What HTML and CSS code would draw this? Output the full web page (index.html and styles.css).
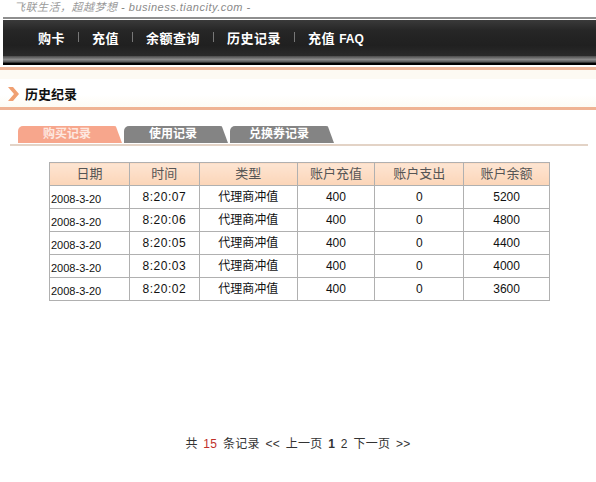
FILE: index.html
```html
<!DOCTYPE html>
<html>
<head>
<meta charset="utf-8">
<link rel="stylesheet" href="styles.css">
</head>
<body>
<div class="slogan"><span class="cn">飞联生活，超越梦想</span> - business.tiancity.com -</div>
<div class="navwrap">
  <div class="nav">
    <span class="item">购卡</span><span class="sep"></span>
    <span class="item">充值</span><span class="sep"></span>
    <span class="item">余额查询</span><span class="sep"></span>
    <span class="item">历史记录</span><span class="sep"></span>
    <span class="item">充值 <span class="faq">FAQ</span></span>
  </div>
  <div class="navshine"></div>
</div>
<div class="navunder"></div>
<div class="title">
  <svg class="arrow" width="11" height="14" viewBox="0 0 11 14"><polygon points="0,0 5,0 11,7 5,14 0,14 6,7" fill="#f0a072"/></svg>
  <span>历史纪录</span>
</div>
<div class="tabs">
  <div class="tab active">购买记录</div>
  <div class="tab">使用记录</div>
  <div class="tab">兑换券记录</div>
</div>
<table class="grid">
  <thead>
    <tr><th class="c1">日期</th><th class="c2">时间</th><th class="c3">类型</th><th class="c4">账户充值</th><th class="c5">账户支出</th><th class="c6">账户余额</th></tr>
  </thead>
  <tbody>
    <tr><td class="date">2008-3-20</td><td class="time">8:20:07</td><td>代理商冲值</td><td>400</td><td>0</td><td>5200</td></tr>
    <tr><td class="date">2008-3-20</td><td class="time">8:20:06</td><td>代理商冲值</td><td>400</td><td>0</td><td>4800</td></tr>
    <tr><td class="date">2008-3-20</td><td class="time">8:20:05</td><td>代理商冲值</td><td>400</td><td>0</td><td>4400</td></tr>
    <tr><td class="date">2008-3-20</td><td class="time">8:20:03</td><td>代理商冲值</td><td>400</td><td>0</td><td>4000</td></tr>
    <tr><td class="date">2008-3-20</td><td class="time">8:20:02</td><td>代理商冲值</td><td>400</td><td>0</td><td>3600</td></tr>
  </tbody>
</table>
<div class="pager">共 <span class="num">15</span> 条记录 &lt;&lt; 上一页 <b>1</b> 2 下一页 &gt;&gt;</div>
</body>
</html>
```
FILE: styles.css
```css
html, body {
  margin: 0;
  padding: 0;
  background: #fff;
  width: 596px;
  height: 482px;
  overflow: hidden;
  font-family: "Liberation Sans", "Noto Sans CJK SC", sans-serif;
  font-size: 12px;
  color: #000;
}
.slogan {
  height: 17px;
  line-height: 14px;
  padding-left: 14px;
  font-size: 11px;
  font-style: italic;
  color: #8a8a8a;
  letter-spacing: 0.5px;
}
.slogan .cn { color: #9a9a9a; }
.navwrap {
  border-top: 2px solid #8e8e8e;
  border-bottom: 2px solid #000;
  padding-top: 1px;
  background: #fff;
  margin-left: 3px;
}
.nav {
  height: 34px;
  background: linear-gradient(#3a3a3a, #262626 30%, #202020 70%, #2a2a2a);
  display: flex;
  align-items: center;
  padding-left: 35px;
  padding-bottom: 2px;
}
.navshine {
  height: 7px;
  background: linear-gradient(#4a4a4a, #8a8a8a 50%, #606060 80%, #1c1c1c);
}
.nav .item {
  color: #fff;
  font-weight: bold;
  font-size: 13px;
  letter-spacing: 0.5px;
}
.nav .faq { letter-spacing: 0; font-size: 12px; }
.nav .sep {
  width: 1px;
  height: 10px;
  background: #777;
  margin: 0 13px;
}
.nav .sep:nth-of-type(3) { margin: 0 12px; }
.navunder {
  height: 3px;
  background: #efb79a;
  margin-top: 2px;
  border-bottom: 9px solid #fdfaf3;
}
.title {
  display: flex;
  align-items: center;
  height: 27px;
  padding-left: 8px;
  margin-top: 1px;
  border-bottom: 3px solid #efb393;
  background: linear-gradient(#fff 55%, #fdfbf3);
}
.title .arrow { margin-right: 6px; }
.title span {
  font-weight: bold;
  font-size: 13px;
  color: #111;
}
.tabs {
  display: flex;
  margin: 16px 8px 0 10px;
  padding-left: 8px;
  border-bottom: 2px solid #e3d3c6;
  height: 18px;
}
.tab {
  width: 104px;
  height: 17px;
  margin-right: 2px;
  padding-right: 6px;
  box-sizing: border-box;
  background: #848484;
  color: #fff;
  font-weight: bold;
  font-size: 12px;
  text-align: center;
  line-height: 17px;
  border-radius: 5px 8px 0 0;
  clip-path: polygon(0 0, 94% 0, 100% 100%, 0 100%);
}
.tab.active {
  background: #f7a68c;
  color: #fde8e0;
}
.grid {
  border-collapse: collapse;
  margin: 16px 0 0 49px;
  width: 501px;
}
.grid th, .grid td {
  border: 1px solid #b0b0b0;
  height: 22px;
  line-height: 16px;
  padding: 0;
  text-align: center;
  font-size: 12px;
}
.grid th {
  background: linear-gradient(#fde5d2, #fcd5b8);
  color: #555;
  font-weight: normal;
  font-size: 13px;
}
.grid td { color: #111; }
.grid td.date { text-align: left; padding: 3px 0 0 1px; height: 19px; font-size: 11px; }
.grid td.time { letter-spacing: 0.5px; }
.c1 { width: 79px; }
.c2 { width: 69px; }
.c3 { width: 97px; }
.c4 { width: 77px; }
.c5 { width: 88px; }
.c6 { width: 85px; }
.pager {
  margin-top: 133px;
  text-align: center;
  color: #333;
  font-size: 12px;
  word-spacing: 2px;
  letter-spacing: 0.3px;
}
.pager .num { color: #c0302a; }
```
